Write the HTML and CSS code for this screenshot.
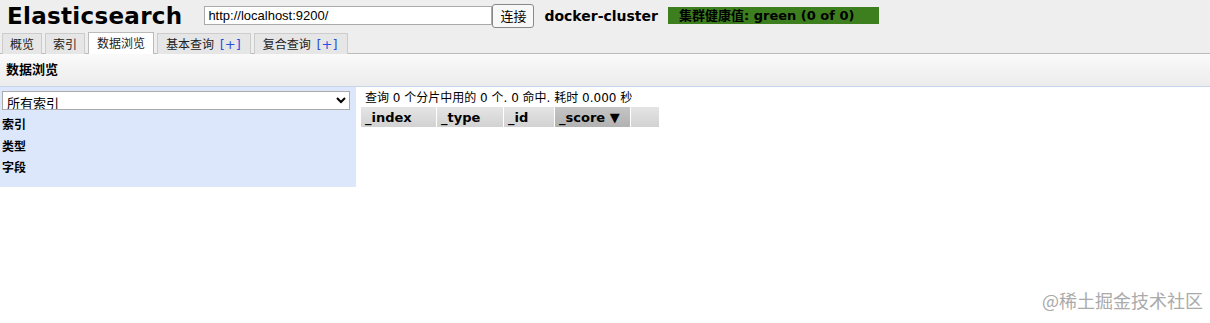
FILE: index.html
```html
<!DOCTYPE html>
<html lang="zh">
<head>
  <meta charset="UTF-8">
  <title>Elasticsearch head</title>
  <link rel="stylesheet" href="styles.css">
</head>
<body>
  <div class="header">
    <div class="top-bar">
      <h1 class="logo">Elasticsearch</h1>
      <input class="url-input" type="text" value="http://localhost:9200/">
      <button class="connect-btn">连接</button>
      <span class="cluster-name">docker-cluster</span>
      <span class="cluster-health">集群健康值: green (0 of 0)</span>
    </div>
    <div class="tabs">
      <div class="tab">概览</div>
      <div class="tab">索引</div>
      <div class="tab active">数据浏览</div>
      <div class="tab query">基本查询 <span class="plus">[+]</span></div>
      <div class="tab query">复合查询 <span class="plus">[+]</span></div>
    </div>
  </div>

  <div class="section-title">数据浏览</div>

  <div class="browser">
    <div class="filter">
      <select class="index-select">
        <option>所有索引</option>
      </select>
      <div class="filter-group">索引</div>
      <div class="filter-group">类型</div>
      <div class="filter-group">字段</div>
    </div>
    <div class="results">
      <div class="summary">查询 0 个分片中用的 0 个. 0 命中. 耗时 0.000 秒</div>
      <table class="results-table">
        <tr>
          <th class="col-index">_index</th>
          <th class="col-type">_type</th>
          <th class="col-id">_id</th>
          <th class="col-score sorted">_score ▼</th>
          <th class="col-empty"></th>
        </tr>
      </table>
    </div>
  </div>

  <div class="watermark">@稀土掘金技术社区</div>
</body>
</html>
```

FILE: styles.css
```css
* {
  margin: 0;
  padding: 0;
  box-sizing: border-box;
}

body {
  font-family: 'DejaVu Sans', 'Noto Sans CJK SC', sans-serif;
  font-size: 12px;
  color: #000;
  background: #fff;
  width: 1210px;
  height: 323px;
  position: relative;
  overflow: hidden;
}

.header {
  background: #eee;
  border-bottom: 1px solid #bbb;
}

.top-bar {
  display: flex;
  align-items: center;
  height: 31px;
  padding-left: 7px;
}

.logo {
  font-size: 23px;
  font-weight: bold;
  letter-spacing: 0.3px;
  margin-right: 22px;
  line-height: 30px;
}

.url-input {
  width: 288px;
  height: 19px;
  border: 1px solid #aaa;
  padding: 0 3px;
  font-family: 'Liberation Sans', Arial, sans-serif;
  font-size: 13px;
  background: #fff;
}

.connect-btn {
  width: 42px;
  height: 24px;
  border: 1px solid #888;
  border-radius: 3px;
  background: #f8f8f8;
  font-family: 'Noto Sans CJK SC', sans-serif;
  font-size: 13px;
}

.cluster-name {
  margin-left: 10px;
  font-weight: bold;
  font-size: 14px;
}

.cluster-health {
  margin-left: 10px;
  background: #3d7e1e;
  width: 211px;
  height: 17px;
  line-height: 17px;
  padding-left: 11px;
  font-weight: bold;
  font-size: 13px;
}

.tabs {
  display: flex;
  gap: 3px;
  padding-left: 2px;
  height: 22px;
  align-items: flex-end;
}

.tab {
  height: 21px;
  line-height: 20px;
  padding: 0 7px;
  border: 1px solid #ccc;
  border-bottom: none;
  background: #e6e6e6;
  font-family: 'Noto Sans CJK SC', sans-serif;
  font-size: 12px;
  color: #222;
  margin-bottom: -1px;
}

.tab.query {
  padding: 0 9px 0 8px;
}

.tab.active {
  background: #fff;
  height: 22px;
  padding: 0 8px;
  border-color: #bbb;
}

.plus {
  color: #2a4ee0;
  font-family: 'DejaVu Sans', sans-serif;
  font-size: 13px;
  margin-left: 3px;
}

.section-title {
  height: 33px;
  line-height: 30px;
  padding-left: 6px;
  font-weight: bold;
  font-size: 13px;
  font-family: 'Noto Sans CJK SC', sans-serif;
  background: linear-gradient(#fafafa, #ececec);
  border-bottom: 1px solid #c8d4ea;
}

.browser {
  display: flex;
  align-items: flex-start;
}

.filter {
  width: 356px;
  height: 100px;
  background: #dde7fb;
  padding: 4px 6px 0 2px;
}

.index-select {
  width: 348px;
  height: 19px;
  font-family: 'Noto Sans CJK SC', sans-serif;
  font-size: 13px;
  border: 1px solid #aaa;
  background: #fff;
}

.filter-group {
  font-weight: bold;
  font-family: 'Noto Sans CJK SC', sans-serif;
  font-size: 12px;
  height: 21.5px;
  line-height: 26px;
}

.results {
  padding-left: 5px;
  padding-top: 3px;
}

.summary {
  font-family: 'DejaVu Sans', 'Noto Sans CJK SC', sans-serif;
  font-size: 12px;
  padding-left: 4px;
  height: 17px;
  line-height: 16px;
}

.results-table {
  border-collapse: separate;
  border-spacing: 1px 0;
  margin-left: -1px;
}

.results-table th {
  height: 20px;
  background: linear-gradient(#e4e4e4, #d2d2d2);
  text-align: left;
  font-size: 13px;
  font-weight: bold;
  padding: 0 4px;
  white-space: nowrap;
}

.col-index { width: 75px; }
.col-type { width: 66px; }
.col-id { width: 50px; }
.col-score { width: 75px; }
.col-empty { width: 28px; }

.results-table th.sorted {
  background: linear-gradient(#c4c4c4, #b2b2b2);
}

.watermark {
  position: absolute;
  right: 7px;
  bottom: 10px;
  font-family: 'Noto Sans CJK SC', sans-serif;
  font-size: 18px;
  color: #aaa;
}
```
